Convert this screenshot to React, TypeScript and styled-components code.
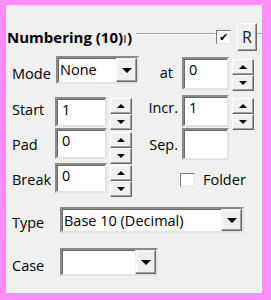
import React from "react";
import styled, { createGlobalStyle } from "styled-components";

const Global = createGlobalStyle`
  html, body { margin: 0; padding: 0; background: #fc8ef7; }
  body { font-family: "Open Sans", "Noto Sans", sans-serif; color: #000; }
  * { box-sizing: border-box; }
`;

const Panel = styled.div`
  margin: 5px 9px 0 6px;
  height: 288px;
  background: #f0f0f0;
  padding-top: 18px;
  display: flex;
  flex-direction: column;
  font-size: 14.5px;
`;

const Header = styled.div`
  display: flex;
  align-items: center;
  height: 28px;
`;

const Title = styled.span`
  font-weight: 700;
  font-size: 15px;
  white-space: nowrap;
  padding-left: 1px;
`;

const Thin = styled.span`
  font-weight: 400;
  color: #333;
`;

const Rule = styled.div<{ $w?: number }>`
  flex: ${(p) => (p.$w ? `0 0 ${p.$w}px` : "1")};
  height: 2px;
  border-top: 1px solid #a0a0a0;
  border-bottom: 1px solid #ffffff;
  margin: 0 ${(p) => (p.$w ? 0 : 1)}px 6px ${(p) => (p.$w ? 0 : 4)}px;
`;

const Check = styled.div<{ $dy?: number; $mx?: number }>`
  width: 15px;
  height: 14px;
  background: #fff;
  border-top: 1px solid #7a7a7a;
  border-left: 1px solid #7a7a7a;
  border-right: 1px solid #e3e3e3;
  border-bottom: 1px solid #e3e3e3;
  margin-top: ${(p) => p.$dy ?? 0}px;
  margin-left: ${(p) => p.$mx ?? 0}px;
  display: flex;
  align-items: center;
  justify-content: center;
  font-size: 11px;
  line-height: 1;
  font-family: "DejaVu Sans", sans-serif;
`;

const RaisedButton = styled.div`
  width: 20px;
  height: 28px;
  margin-left: 6px;
  background: #f0f0f0;
  border-top: 1px solid #fff;
  border-left: 1px solid #fff;
  border-right: 1px solid #696969;
  border-bottom: 1px solid #696969;
  box-shadow: inset -1px -1px 0 #a0a0a0;
  display: flex;
  align-items: center;
  justify-content: center;
  font-size: 16px;
  color: #222;
`;

const Row = styled.div<{ $h: number; $mt?: number }>`
  display: flex;
  align-items: flex-start;
  height: ${(p) => p.$h}px;
  margin-top: ${(p) => p.$mt ?? 0}px;
  padding-left: 6px;
`;

const LeftGroup = styled.div`
  display: flex;
  align-items: flex-start;
  width: 127px;
  flex: 0 0 127px;
`;

const Label = styled.div<{ $w: number; $dy: number; $right?: boolean; $pr?: number }>`
  width: ${(p) => p.$w}px;
  flex: 0 0 ${(p) => p.$w}px;
  margin-top: ${(p) => p.$dy}px;
  line-height: 18px;
  white-space: nowrap;
  text-align: ${(p) => (p.$right ? "right" : "left")};
  padding-right: ${(p) => p.$pr ?? 0}px;
`;

const Field = styled.div<{ $w: number; $h: number; $dy?: number }>`
  width: ${(p) => p.$w}px;
  height: ${(p) => p.$h}px;
  flex: 0 0 ${(p) => p.$w}px;
  margin-top: ${(p) => p.$dy ?? 0}px;
  background: #fff;
  border-top: 2px solid #8a8a8a;
  border-left: 2px solid #8a8a8a;
  border-right: 2px solid #e3e3e3;
  border-bottom: 2px solid #e3e3e3;
  box-shadow: inset 1px 1px 0 #696969;
  padding: 2px 5px;
  line-height: 18px;
`;

const SpinBox = styled.div<{ $dy: number }>`
  display: flex;
  flex-direction: column;
  width: 22px;
  margin-left: 3px;
  margin-top: ${(p) => p.$dy}px;
`;

const SpinButton = styled.div`
  height: 16px;
  background: #f0f0f0;
  border-top: 1px solid #fff;
  border-left: 1px solid #fff;
  border-right: 1px solid #696969;
  border-bottom: 1px solid #696969;
  box-shadow: inset -1px -1px 0 #a0a0a0;
  display: flex;
  align-items: center;
  justify-content: center;
`;

const Tri = styled.div<{ $up?: boolean; $size: number; $h: number }>`
  width: 0;
  height: 0;
  border-left: ${(p) => p.$size}px solid transparent;
  border-right: ${(p) => p.$size}px solid transparent;
  ${(p) =>
    p.$up
      ? `border-bottom: ${p.$h}px solid #000;`
      : `border-top: ${p.$h}px solid #000;`}
`;

const Select = styled.div<{ $w: number; $h: number }>`
  display: flex;
  width: ${(p) => p.$w}px;
  height: ${(p) => p.$h}px;
  flex: 0 0 ${(p) => p.$w}px;
  background: #fff;
  border-top: 2px solid #8a8a8a;
  border-left: 2px solid #8a8a8a;
  border-right: 2px solid #e3e3e3;
  border-bottom: 2px solid #e3e3e3;
  box-shadow: inset 1px 1px 0 #696969;
`;

const SelectText = styled.div`
  flex: 1;
  padding: 3px 0 0 2px;
  line-height: 18px;
  white-space: nowrap;
  overflow: hidden;
`;

const SelectButton = styled.div`
  width: 21px;
  flex: 0 0 21px;
  background: #f0f0f0;
  border-top: 1px solid #f0f0f0;
  border-left: 1px solid #f0f0f0;
  border-right: 1px solid #696969;
  border-bottom: 1px solid #696969;
  box-shadow: inset -1px -1px 0 #a0a0a0, inset 1px 1px 0 #fff;
  display: flex;
  align-items: center;
  justify-content: center;
`;

const Spacer = styled.div<{ $w: number }>`
  flex: 0 0 ${(p) => p.$w}px;
`;

const FolderText = styled.div`
  margin-left: 8px;
  margin-top: 8px;
  line-height: 18px;
`;

function Spinner({ dy }: { dy: number }) {
  return (
    <SpinBox $dy={dy}>
      <SpinButton>
        <Tri $up $size={4} $h={4} />
      </SpinButton>
      <SpinButton>
        <Tri $size={4} $h={4} />
      </SpinButton>
    </SpinBox>
  );
}

function Dropdown({ w, h, value }: { w: number; h: number; value: string }) {
  return (
    <Select $w={w} $h={h}>
      <SelectText>{value}</SelectText>
      <SelectButton>
        <Tri $size={5} $h={5} />
      </SelectButton>
    </Select>
  );
}

export default function App() {
  return (
    <>
      <Global />
      <Panel>
        <Header>
          <Title>
            Numbering (10)<Thin>ı</Thin>)
          </Title>
          <Rule />
          <Check>✔</Check>
          <RaisedButton>R</RaisedButton>
          <Rule $w={5} />
        </Header>

        <Row $h={39} $mt={5}>
          <LeftGroup>
            <Label $w={44} $dy={9}>Mode</Label>
            <Dropdown w={83} h={28} value="None" />
          </LeftGroup>
          <Label $w={43} $dy={8} $right $pr={9}>at</Label>
          <Field $w={47} $h={33} $dy={1}>0</Field>
          <Spinner dy={3} />
        </Row>

        <Row $h={33}>
          <LeftGroup>
            <Label $w={43} $dy={6}>Start</Label>
            <Field $w={52} $h={30} $dy={2}>1</Field>
            <Spinner dy={3} />
          </LeftGroup>
          <Label $w={43} $dy={4} $right $pr={4}>Incr.</Label>
          <Field $w={47} $h={32} $dy={0}>1</Field>
          <Spinner dy={3} />
        </Row>

        <Row $h={35}>
          <LeftGroup>
            <Label $w={43} $dy={8}>Pad</Label>
            <Field $w={52} $h={31} $dy={0}>0</Field>
            <Spinner dy={4} />
          </LeftGroup>
          <Label $w={43} $dy={8} $right $pr={4}>Sep.</Label>
          <Field $w={47} $h={32} $dy={0} />
        </Row>

        <Row $h={34}>
          <LeftGroup>
            <Label $w={43} $dy={8}>Break</Label>
            <Field $w={52} $h={30} $dy={0}>0</Field>
            <Spinner dy={2} />
          </LeftGroup>
          <Spacer $w={41} />
          <Check $dy={10} />
          <FolderText>Folder</FolderText>
        </Row>

        <Row $h={26} $mt={10}>
          <Label $w={48} $dy={7}>Type</Label>
          <Dropdown w={184} h={26} value="Base 10 (Decimal)" />
        </Row>

        <Row $h={28} $mt={15}>
          <Label $w={48} $dy={9}>Case</Label>
          <Dropdown w={98} h={28} value="" />
        </Row>
      </Panel>
    </>
  );
}
